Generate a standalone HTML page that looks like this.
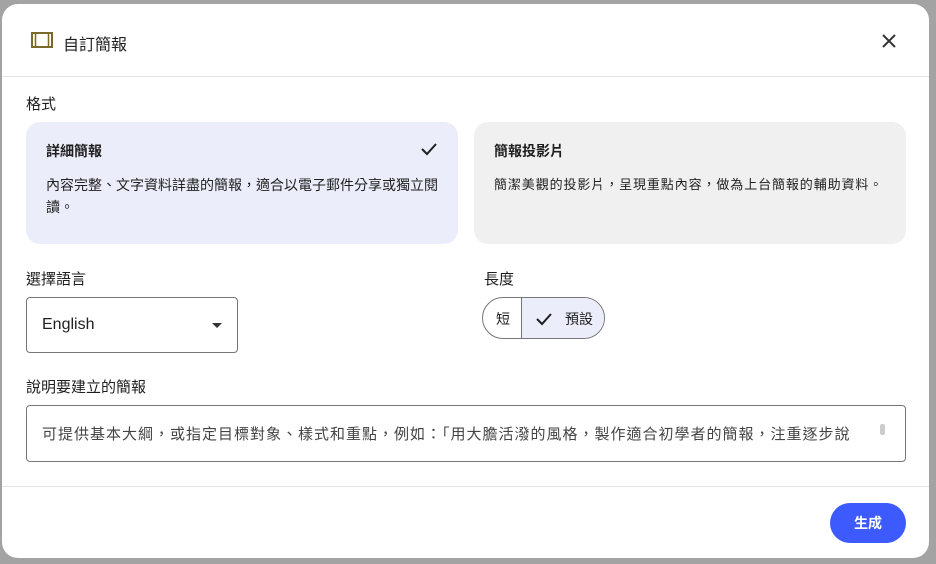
<!DOCTYPE html>
<html><head><meta charset="utf-8"><style>
*{box-sizing:border-box;margin:0;padding:0}
body{width:936px;height:564px;background:#a3a3a3;font-family:"Liberation Sans","Noto Sans CJK TC",sans-serif;color:#1f1f1f;position:relative;overflow:hidden}
.dlg{position:absolute;left:2px;top:4px;width:927px;height:554px;background:#fff;border-radius:16px;overflow:hidden}
.abs{position:absolute}
.card{position:absolute;top:118px;width:432px;height:122px;border-radius:14px}
.t{font-size:14px;font-weight:bold}
.d{font-size:13px;line-height:22px}
</style></head><body>
<div class="dlg">
 <svg class="abs" style="left:29px;top:28px" width="22" height="16" viewBox="0 0 22 16"><rect x="1" y="1" width="20" height="14" fill="none" stroke="#7a6a2a" stroke-width="2"/><line x1="4.5" y1="1" x2="4.5" y2="15" stroke="#7a6a2a" stroke-width="1.5"/><line x1="17.5" y1="1" x2="17.5" y2="15" stroke="#7a6a2a" stroke-width="1.5"/></svg>
 <div class="abs" style="left:61px;top:27px;font-size:16px">自訂簡報</div>
 <svg class="abs" style="left:879px;top:29px" width="16" height="16" viewBox="0 0 16 16"><path d="M2 2L14 14M14 2L2 14" stroke="#333" stroke-width="2"/></svg>
 <div class="abs" style="left:0;top:72px;width:927px;height:1px;background:#e3e3e3"></div>
 <div class="abs" style="left:24px;top:89px;font-size:15px">格式</div>
 <div class="card" style="left:24px;background:#ebedfa">
  <div class="abs t" style="left:20px;top:19px">詳細簡報</div>
  <svg class="abs" style="left:394px;top:20px" width="18" height="14" viewBox="0 0 18 14"><path d="M2 7l5 5L16 2" fill="none" stroke="#1f1f1f" stroke-width="2"/></svg>
  <div class="abs d" style="left:20px;top:52px;width:410px;font-size:14px;letter-spacing:0;white-space:nowrap">內容完整、文字資料詳盡的簡報，適合以電子郵件分享或獨立閱<br>讀。</div>
 </div>
 <div class="card" style="left:472px;background:#f0f0f0">
  <div class="abs t" style="left:20px;top:19px">簡報投影片</div>
  <div class="abs d" style="left:20px;top:52px;letter-spacing:0.9px">簡潔美觀的投影片，呈現重點內容，做為上台簡報的輔助資料。</div>
 </div>
 <div class="abs" style="left:24px;top:264px;font-size:15px">選擇語言</div>
 <div class="abs" style="left:24px;top:293px;width:212px;height:56px;border:1px solid #747775;border-radius:4px">
  <div class="abs" style="left:15px;top:18px;font-size:16px">English</div>
  <div class="abs" style="left:185px;top:25px;width:0;height:0;border-left:5px solid transparent;border-right:5px solid transparent;border-top:5px solid #333"></div>
 </div>
 <div class="abs" style="left:482px;top:264px;font-size:15px">長度</div>
 <div class="abs" style="left:480px;top:293px;width:123px;height:42px;border:1px solid #747775;border-radius:21px;overflow:hidden">
  <div class="abs" style="left:38px;top:0;width:85px;height:42px;background:#ebedfa;border-left:1px solid #747775"></div>
  <div class="abs" style="left:13px;top:11px;font-size:14px">短</div>
  <svg class="abs" style="left:52px;top:14px" width="18" height="14" viewBox="0 0 18 14"><path d="M2 7l5 5L16 2" fill="none" stroke="#1f1f1f" stroke-width="2"/></svg>
  <div class="abs" style="left:82px;top:11px;font-size:14px">預設</div>
 </div>
 <div class="abs" style="left:24px;top:372px;font-size:15px">說明要建立的簡報</div>
 <div class="abs" style="left:24px;top:401px;width:880px;height:57px;border:1px solid #747775;border-radius:4px">
  <div class="abs" style="left:15px;top:17px;font-size:15px;color:#444;white-space:nowrap;letter-spacing:1px">可提供基本大綱，或指定目標對象、樣式和重點，例如：「用大膽活潑的風格，製作適合初學者的簡報，注重逐步說</div>
  <div class="abs" style="left:853px;top:18px;width:5px;height:11px;background:#ccc;border-radius:2px"></div>
 </div>
 <div class="abs" style="left:0;top:482px;width:927px;height:1px;background:#e3e3e3"></div>
 <div class="abs" style="left:828px;top:499px;width:76px;height:40px;background:#3d5afe;border-radius:20px;color:#fff;font-size:14px;font-weight:bold;text-align:center;line-height:40px">生成</div>
</div>
</body></html>
